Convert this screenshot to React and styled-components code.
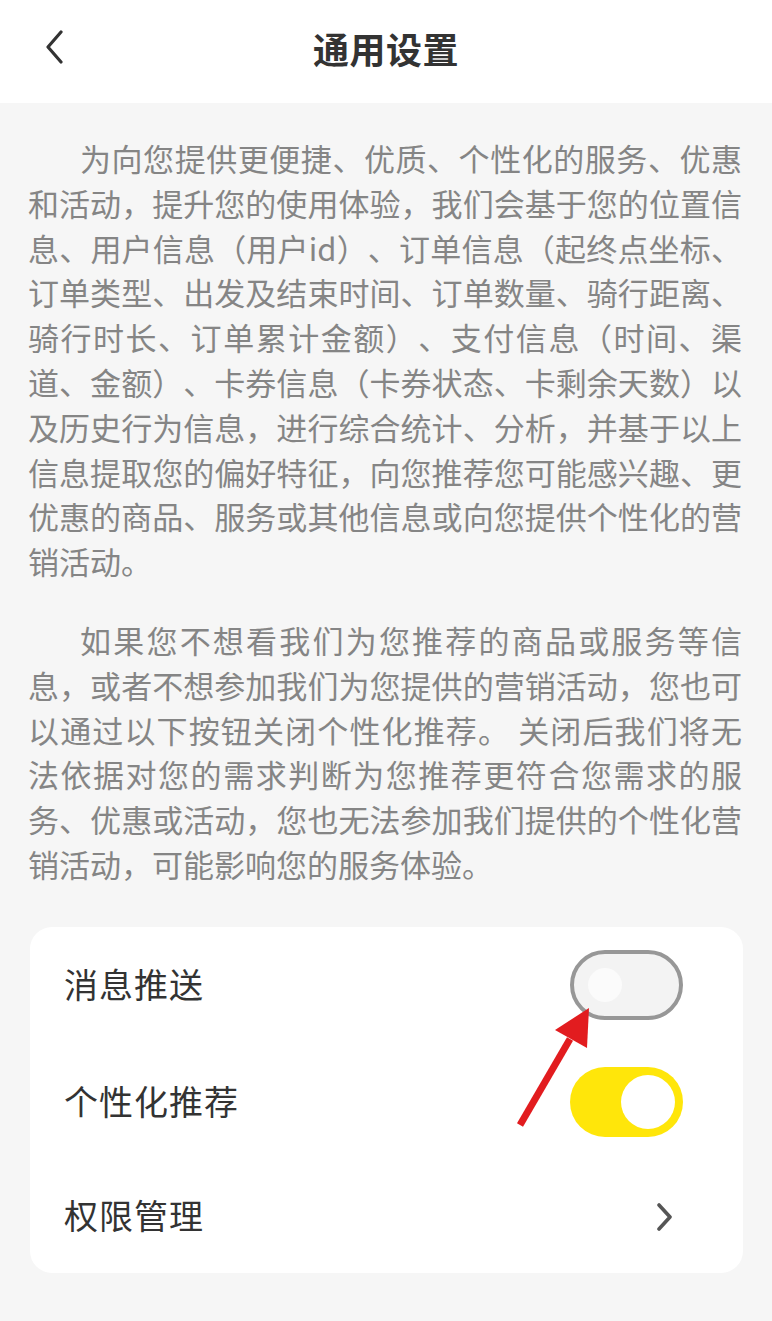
import React, { useState } from "react";
import styled, { createGlobalStyle } from "styled-components";

const GlobalStyle = createGlobalStyle`
  html, body {
    margin: 0;
    padding: 0;
    background: #f6f6f6;
  }
  body {
    font-family: "Noto Sans CJK SC", "Noto Sans", sans-serif;
    text-spacing-trim: space-all;
  }
`;

const Page = styled.div`
  width: 772px;
  min-height: 1321px;
  background: #f6f6f6;
`;

const Header = styled.header`
  position: relative;
  height: 103px;
  box-sizing: border-box;
  padding-bottom: 8px;
  background: #fff;
  display: flex;
  align-items: center;
  justify-content: center;
`;

const BackButton = styled.button`
  position: absolute;
  left: 38px;
  top: 25px;
  width: 32px;
  height: 44px;
  padding: 0;
  border: 0;
  background: none;
  display: flex;
  align-items: center;
  justify-content: center;
`;

const Title = styled.h1`
  margin: 0;
  font-size: 36px;
  font-weight: 700;
  color: #333;
  letter-spacing: 0.5px;
`;

const Intro = styled.section`
  padding: 33px 30px 0 28px;
`;

const Paragraph = styled.p`
  margin: 0 0 34px;
  width: 714px;
  font-size: 31px;
  line-height: 44.8px;
  color: #858585;
  text-indent: 52px;
  text-align: justify;
  text-spacing-trim: space-all;
`;

const Card = styled.div`
  position: relative;
  margin: 40px 29px 0 30px;
  background: #fff;
  border-radius: 22px;
`;

const Row = styled.div`
  height: ${(p) => p.$h || 117}px;
  display: flex;
  align-items: center;
  justify-content: space-between;
  padding: 0 60px 0 34px;
`;

const Label = styled.span`
  font-size: 34px;
  color: #333;
  letter-spacing: 1px;
  margin-top: -4px;
`;

const Switch = styled.button`
  position: relative;
  width: 113px;
  height: 70px;
  padding: 0;
  border-radius: 35px;
  box-sizing: border-box;
  border: ${(p) => (p.$on ? "0" : "4px solid #979797")};
  background: ${(p) => (p.$on ? "#ffe60a" : "#f3f3f3")};
  cursor: pointer;
`;

const Knob = styled.span`
  position: absolute;
  top: 50%;
  border-radius: 50%;
  background: #fff;
  transform: translateY(-50%);
  ${(p) =>
    p.$on
      ? "right: 8px; width: 54px; height: 54px;"
      : "left: 14px; width: 34px; height: 34px; background: #fbfbfb;"}
`;

const ChevronWrap = styled.span`
  display: flex;
  margin-right: 9px;
`;

const Arrow = styled.svg`
  position: absolute;
  left: 0;
  top: 0;
  pointer-events: none;
`;

const Toggle = ({ on, onClick }) => (
  <Switch $on={on} onClick={onClick}>
    <Knob $on={on} />
  </Switch>
);

export default function App() {
  const [push, setPush] = useState(false);
  const [rec, setRec] = useState(true);

  return (
    <Page>
      <GlobalStyle />
      <Header>
        <BackButton aria-label="返回">
          <svg width="22" height="34" viewBox="0 0 22 34">
            <path d="M18 2 L5 17 L18 32" fill="none" stroke="#333" strokeWidth="3.2" strokeLinecap="round" strokeLinejoin="round" />
          </svg>
        </BackButton>
        <Title>通用设置</Title>
      </Header>

      <Intro>
        <Paragraph>
          为向您提供更便捷、优质、个性化的服务、优惠和活动，提升您的使用体验，我们会基于您的位置信息、用户信息（用户id）、订单信息（起终点坐标、订单类型、出发及结束时间、订单数量、骑行距离、骑行时长、订单累计金额）、支付信息（时间、渠道、金额）、卡券信息（卡券状态、卡剩余天数）以及历史行为信息，进行综合统计、分析，并基于以上信息提取您的偏好特征，向您推荐您可能感兴趣、更优惠的商品、服务或其他信息或向您提供个性化的营销活动。
        </Paragraph>
        <Paragraph>
          如果您不想看我们为您推荐的商品或服务等信息，或者不想参加我们为您提供的营销活动，您也可以通过以下按钮关闭个性化推荐。 关闭后我们将无法依据对您的需求判断为您推荐更符合您需求的服务、优惠或活动，您也无法参加我们提供的个性化营销活动，可能影响您的服务体验。
        </Paragraph>
      </Intro>

      <Card>
        <Row>
          <Label>消息推送</Label>
          <Toggle on={push} onClick={() => setPush(!push)} />
        </Row>
        <Row>
          <Label>个性化推荐</Label>
          <Toggle on={rec} onClick={() => setRec(!rec)} />
        </Row>
        <Row $h={112}>
          <Label>权限管理</Label>
          <ChevronWrap>
            <svg width="18" height="28" viewBox="0 0 18 28">
              <path d="M3 2 L14 14 L3 26" fill="none" stroke="#555" strokeWidth="3.6" strokeLinecap="round" strokeLinejoin="round" />
            </svg>
          </ChevronWrap>
        </Row>
        <Arrow width="713" height="343" viewBox="0 0 713 343">
          <line x1="490" y1="198" x2="540" y2="112" stroke="#e21c1f" strokeWidth="7" />
          <polygon points="559,81 525,103 557,121" fill="#e21c1f" />
        </Arrow>
      </Card>
    </Page>
  );
}
